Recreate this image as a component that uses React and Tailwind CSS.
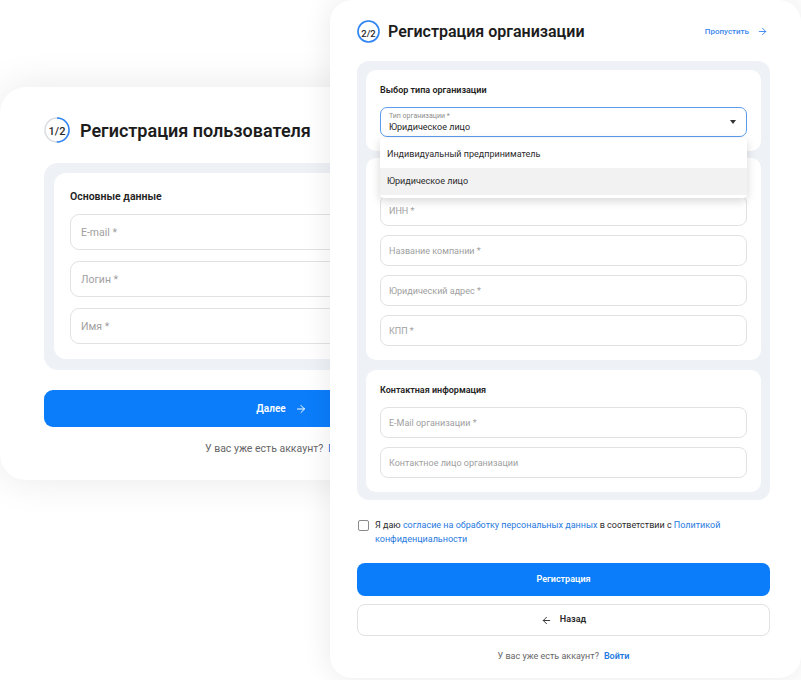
import React from "react";
import { ArrowRight, ArrowLeft } from "lucide-react";

// --- Helpers ---

const StepRing = ({ label, size, half }) => {
  const r = size / 2 - 1;
  const c = 2 * Math.PI * r;
  return (
    <div
      className="relative shrink-0 flex items-center justify-center"
      style={{ width: size, height: size }}
    >
      <svg width={size} height={size} className="absolute inset-0">
        <circle cx={size / 2} cy={size / 2} r={r} fill="none" stroke="#d9dce1" strokeWidth="1.5" />
        <circle
          cx={size / 2}
          cy={size / 2}
          r={r}
          fill="none"
          stroke="#2f86f6"
          strokeWidth="1.6"
          strokeDasharray={half ? `${c / 2} ${c}` : `${c} 0`}
          transform={`rotate(-90 ${size / 2} ${size / 2})`}
        />
      </svg>
      <span className="relative font-medium text-[#2a2a2a] leading-none">{label}</span>
    </div>
  );
};

const Field = ({ placeholder, size = "sm" }) => (
  <input
    readOnly
    placeholder={placeholder}
    className={
      size === "lg"
        ? "block w-full h-[36px] px-[10px] rounded-[9px] border border-[#e2e2e2] bg-white text-[10.5px] placeholder:text-[#a0a0a0] outline-none"
        : "block w-full h-[31px] px-[8px] rounded-[8px] border border-[#e2e2e2] bg-white text-[9px] placeholder:text-[#a0a0a0] outline-none"
    }
  />
);

const Section = ({ title, children, className = "" }) => (
  <div className={`rounded-[10px] bg-white px-[14px] pt-[14px] pb-[14px] ${className}`}>
    <h3 className="text-[9px] leading-[13px] font-semibold text-[#222]">{title}</h3>
    <div className="mt-[10px] flex flex-col gap-[9px]">{children}</div>
  </div>
);

// --- Cards ---

const UserCard = () => (
  <div className="absolute left-0 top-[87px] w-[563px] h-[393px] rounded-[26px] bg-white shadow-[0_0_40px_rgba(0,0,0,0.09)] pt-[30px] px-[44px]">
    <div className="flex items-center h-[26px]">
      <StepRing label={<span className="text-[11px]">1/2</span>} size={26} half />
      <h1 className="ml-[10px] text-[18px] font-semibold text-[#1c1c1c]">
        Регистрация пользователя
      </h1>
    </div>

    <div className="mt-[20px] rounded-[14px] bg-[#eef1f5] p-[10px] pb-[11px]">
      <div className="rounded-[12px] bg-white px-[16px] pt-[16px] pb-[15px]">
        <h3 className="text-[10.5px] leading-[15px] font-semibold text-[#222]">Основные данные</h3>
        <div className="mt-[10px] flex flex-col gap-[11px]">
          <Field size="lg" placeholder="E-mail *" />
          <Field size="lg" placeholder="Логин *" />
          <Field size="lg" placeholder="Имя *" />
        </div>
      </div>
    </div>

    <button className="mt-[20px] w-full h-[37px] rounded-[9px] bg-[#0b7dfb] flex items-center justify-center gap-[9px] text-white text-[10px] font-semibold">
      Далее
      <ArrowRight size={12} strokeWidth={2} />
    </button>

    <p className="mt-[14px] text-center text-[10.5px] leading-[16px] text-[#666]">
      У вас уже есть аккаунт?
      <span className="ml-[5px] font-semibold text-[#1f7ae0]">Войти</span>
    </p>
  </div>
);

const OrgCard = () => (
  <div className="absolute left-[330px] top-0 w-[471px] h-[678px] rounded-[22px] bg-white shadow-[0_0_30px_rgba(0,0,0,0.09)] pt-[20px] pl-[27px] pr-[31px] flex flex-col">
    <div className="flex items-center h-[23px]">
      <StepRing label={<span className="text-[9.5px]">2/2</span>} size={23} />
      <h1 className="ml-[8px] text-[16px] font-semibold text-[#1c1c1c]">
        Регистрация организации
      </h1>
      <button className="ml-auto mr-[2px] flex items-center gap-[8px] text-[8px] font-medium text-[#3a86f0]">
        Пропустить
        <ArrowRight size={11} strokeWidth={2} />
      </button>
    </div>

    <div className="mt-[18px] rounded-[12px] bg-[#eef1f5] p-[9px] pb-[8px]">
      {/* Organization type */}
      <div className="rounded-[10px] bg-white px-[14px] pt-[14px] pb-[14px]">
        <h3 className="text-[9px] leading-[13px] font-semibold text-[#222]">Выбор типа организации</h3>
        <div className="relative mt-[10px]">
          <div className="h-[30px] rounded-[7px] border-[1.5px] border-[#5b9cee] px-[8px] flex items-center">
            <div className="flex flex-col">
              <span className="text-[7px] leading-[9px] text-[#8d8d8d]">Тип организации *</span>
              <span className="text-[9px] leading-[12px] text-[#1f1f1f]">Юридическое лицо</span>
            </div>
            <span className="ml-auto mr-[2px] w-0 h-0 border-l-[3px] border-r-[3px] border-t-[4px] border-l-transparent border-r-transparent border-t-[#333]" />
          </div>
          <div className="absolute left-0 right-0 top-[31px] z-10 rounded-[4px] bg-white py-[3px] shadow-[0_3px_10px_rgba(0,0,0,0.16)]">
            <div className="h-[27px] px-[7px] flex items-center text-[9px] text-[#2b2b2b]">
              Индивидуальный предприниматель
            </div>
            <div className="h-[27px] px-[7px] flex items-center text-[9px] text-[#2b2b2b] bg-[#f2f2f2]">
              Юридическое лицо
            </div>
          </div>
        </div>
      </div>

      <Section title="Реквизиты организации" className="mt-[7px]">
        <Field placeholder="ИНН *" />
        <Field placeholder="Название компании *" />
        <Field placeholder="Юридический адрес *" />
        <Field placeholder="КПП *" />
      </Section>

      <Section title="Контактная информация" className="mt-[10px]">
        <Field placeholder="E-Mail организации *" />
        <Field placeholder="Контактное лицо организации" />
      </Section>
    </div>

    <div className="mt-[18px] flex items-start">
      <span className="mt-[2px] ml-[1px] shrink-0 w-[11px] h-[11px] rounded-[2px] border-[1.5px] border-[#8a8a8a]" />
      <p className="ml-[6px] text-[9px] leading-[14px] text-[#2b2b2b]">
        Я даю <span className="text-[#1f7ae0]">согласие на обработку персональных данных</span> в
        соответствии с <span className="text-[#1f7ae0]">Политикой конфиденциальности</span>
      </p>
    </div>

    <button className="mt-[17px] w-full h-[33px] rounded-[8px] bg-[#0b7dfb] text-white text-[9px] font-semibold">
      Регистрация
    </button>
    <button className="mt-[8px] w-full h-[32px] rounded-[8px] border border-[#e2e2e2] bg-white flex items-center justify-center gap-[8px] text-[9px] font-semibold text-[#2a2a2a]">
      <ArrowLeft size={11} strokeWidth={2} />
      Назад
    </button>

    <p className="mt-[13px] text-center text-[9px] leading-[14px] text-[#666]">
      У вас уже есть аккаунт?
      <span className="ml-[5px] font-semibold text-[#1f7ae0]">Войти</span>
    </p>
  </div>
);

export default function App() {
  return (
    <div className="relative w-[801px] h-[680px] overflow-hidden bg-white font-[Roboto,'Noto_Sans',sans-serif]">
      <UserCard />
      <OrgCard />
    </div>
  );
}
